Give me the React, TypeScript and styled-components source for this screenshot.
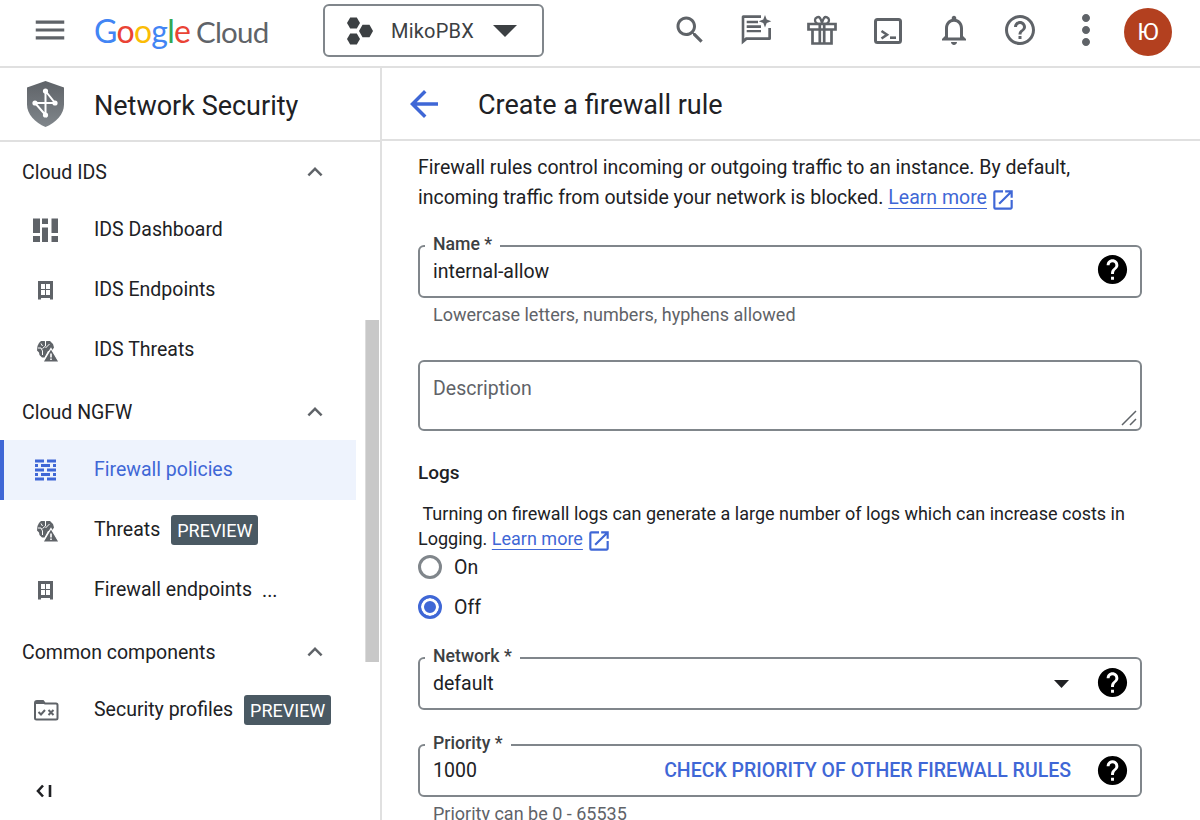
import React from 'react';
import styled, { createGlobalStyle } from 'styled-components';

const GlobalStyle = createGlobalStyle`
  html, body {
    margin: 0;
    padding: 0;
    background: #fff;
    font-family: Roboto, "Liberation Sans", Arial, sans-serif;
    color: #202124;
    overflow: hidden;
  }
  * { box-sizing: border-box; }
`;

const BLUE = '#3f67d6';
const GREY = '#5f6368';

const Page = styled.div`
  width: 1200px;
  height: 820px;
  display: flex;
  flex-direction: column;
  overflow: hidden;
`;

/* top bar */
const TopBar = styled.header`
  height: 68px;
  flex: none;
  display: flex;
  align-items: center;
  border-bottom: 2px solid #e0e0e0;
  padding: 0 28px 4px 31px;
`;

const MenuIcon = styled.svg`
  color: ${GREY};
  margin-bottom: 2px;
  flex: none;
`;

const Logo = styled.div`
  display: flex;
  align-items: baseline;
  margin: 0 0 2px 25px;
  font-family: Lato, Roboto, sans-serif;
  font-size: 32px;
  letter-spacing: -0.8px;
  color: ${GREY};
  width: 187px;
`;

const LogoLetter = styled.span<{ $c: string }>`
  color: ${({ $c }) => $c};
`;

const LogoWord = styled.span`
  margin-left: 6px;
  font-size: 29.5px;
`;

const ProjectPicker = styled.div`
  margin: 0 0 1px 42px;
  width: 221px;
  height: 53px;
  border: 2px solid #80868b;
  border-radius: 6px;
  display: flex;
  align-items: center;
  padding-left: 22px;
  font-size: 20px;
  color: #3c4043;
`;

const ProjectName = styled.span`
  margin-left: 17px;
  margin-right: 19px;
  letter-spacing: 0.2px;
`;

const IconGroup = styled.div`
  margin-left: auto;
  display: flex;
  align-items: center;
`;

const IconButton = styled.div`
  width: 66px;
  height: 48px;
  margin-bottom: 2px;
  display: flex;
  align-items: center;
  justify-content: center;
  color: ${GREY};
`;

const Avatar = styled.div`
  width: 48px;
  height: 48px;
  margin: 2px 0 0 5px;
  border-radius: 50%;
  background: #b3401f;
  color: #fff;
  font-size: 24px;
  display: flex;
  align-items: center;
  justify-content: center;
`;

/* page body */
const Body = styled.div`
  flex: 1;
  display: flex;
  min-height: 0;
`;

const Sidebar = styled.aside`
  width: 382px;
  flex: none;
  border-right: 2px solid #e0e0e0;
  position: relative;
  display: flex;
  flex-direction: column;
`;

const SideHead = styled.div`
  height: 74px;
  flex: none;
  display: flex;
  align-items: center;
  padding-left: 26px;
  border-bottom: 2px solid #e0e0e0;
  font-size: 27px;
  color: #202124;
`;

const SideTitle = styled.span`
  margin: 3px 0 0 28px;
`;

const NavList = styled.nav`
  flex: 1;
  padding-top: 2px;
  min-height: 0;
`;

const NavSection = styled.section`
  margin-bottom: 4px;
`;

const NavHeader = styled.div`
  height: 56px;
  width: 356px;
  display: flex;
  align-items: center;
  justify-content: space-between;
  padding-left: 22px;
  font-size: 19.5px;
  color: #202124;
  svg { color: ${GREY}; margin-right: 26px; }
`;

const NavItem = styled.div<{ $active?: boolean }>`
  height: 60px;
  width: 356px;
  display: flex;
  align-items: center;
  padding-left: ${({ $active }) => ($active ? '26px' : '30px')};
  border-left: ${({ $active }) => ($active ? `4px solid ${BLUE}` : 'none')};
  background: ${({ $active }) => ($active ? '#eef3fd' : 'transparent')};
  color: ${({ $active }) => ($active ? BLUE : '#202124')};
  font-size: 19.5px;
  svg { color: ${({ $active }) => ($active ? BLUE : GREY)}; flex: none; }
`;

const NavLabel = styled.span`
  margin: 0 0 2px 34px;
`;

const Ellipsis = styled.span`
  margin-left: 10px;
  font-size: 19.5px;
`;

const PreviewBadge = styled.span`
  margin-left: 11px;
  height: 30px;
  padding: 0 6px;
  display: inline-flex;
  align-items: center;
  background: #4a5963;
  color: #fff;
  border-radius: 3px;
  font-size: 18px;
`;

const CollapseRow = styled.div`
  height: 40px;
  margin-top: 31px;
  padding-left: 33px;
  display: flex;
  align-items: center;
  color: #202124;
`;

const ScrollThumb = styled.div`
  position: absolute;
  left: 365px;
  top: 252px;
  width: 14px;
  height: 342px;
  background: #c8c8c8;
  border-left: 1px solid #dcdcdc;
`;

/* right column */
const Main = styled.main`
  flex: 1;
  min-width: 0;
  display: flex;
  flex-direction: column;
`;

const MainHead = styled.div`
  height: 73px;
  flex: none;
  display: flex;
  align-items: center;
  padding-left: 21px;
  border-bottom: 2px solid #e0e0e0;
  color: ${BLUE};
`;

const PageTitle = styled.h1`
  margin: 3px 0 0 33px;
  font-weight: 400;
  font-size: 27px;
  color: #202124;
`;

const Form = styled.div`
  flex: 1;
  min-height: 0;
  overflow: hidden;
  padding: 12px 58px 0 36px;
  font-size: 19.5px;
  color: #202124;
`;

const Intro = styled.p`
  margin: 0;
  height: 60px;
  line-height: 30px;
`;

const Link = styled.a`
  color: ${BLUE};
  text-decoration: underline;
  text-underline-offset: 4px;
`;

const ExternalIcon = styled.svg`
  color: ${BLUE};
  vertical-align: -9px;
  margin-left: 3px;
`;

const Field = styled.div<{ $h?: number; $mt: number }>`
  position: relative;
  margin-top: ${({ $mt }) => $mt}px;
  height: ${({ $h }) => $h ?? 53}px;
  border: 2px solid #80868b;
  border-radius: 6px;
  display: flex;
  align-items: center;
  padding: 0 10px 0 13px;
`;

const FieldLabel = styled.label`
  position: absolute;
  left: 5px;
  top: -13px;
  padding: 0 8px;
  height: 20px;
  line-height: 20px;
  background: #fff;
  font-size: 17.7px;
  font-weight: 500;
  color: #3c4043;
`;

const FieldValue = styled.span`
  flex: 1;
`;

const Placeholder = styled.span`
  align-self: flex-start;
  margin-top: 15px;
  color: #5f6368;
`;

const Hint = styled.div`
  margin: 6px 0 0 15px;
  font-size: 18px;
  line-height: 22px;
  color: #5f6368;
`;

const ResizeGrip = styled.svg`
  position: absolute;
  right: 1px;
  bottom: 1px;
  color: #5f6368;
`;

const FieldAction = styled.span`
  color: ${BLUE};
  font-weight: 500;
  font-size: 19.5px;
  margin-right: 24px;
`;

const SelectCaret = styled.svg`
  color: #202124;
  margin-right: 26px;
`;

const SectionTitle = styled.h2`
  margin: 30px 0 0;
  font-size: 19px;
  line-height: 24px;
  font-weight: 500;
  color: #202124;
`;

const LogsText = styled.p`
  margin: 16px 0 0;
  height: 50px;
  font-size: 18px;
  line-height: 25px;
`;

const RadioGroup = styled.div`
  margin-top: -4px;
`;

const RadioRow = styled.div`
  height: 40px;
  display: flex;
  align-items: center;
  gap: 12px;
`;

const RadioDot = styled.span<{ $on?: boolean }>`
  width: 24px;
  height: 24px;
  border-radius: 50%;
  border: 3px solid ${({ $on }) => ($on ? BLUE : '#80868b')};
  background: ${({ $on }) => ($on ? BLUE : 'transparent')};
  box-shadow: ${({ $on }) => ($on ? 'inset 0 0 0 3px #fff' : 'none')};
`;

const HelpSvg = styled.svg<{ $up: number }>`
  flex: none;
  margin-bottom: ${({ $up }) => $up}px;
`;

const HelpFilled = ({ up = 0 }: { up?: number }) => (
  <HelpSvg $up={up} width="35" height="35" viewBox="0 0 24 24" fill="#000">
    <path d="M12 2C6.48 2 2 6.48 2 12s4.48 10 10 10 10-4.48 10-10S17.52 2 12 2zm1 17h-2v-2h2v2zm2.07-7.75l-.9.92C13.45 12.9 13 13.5 13 15h-2v-.5c0-1.1.45-2.1 1.17-2.83l1.24-1.26c.37-.36.59-.86.59-1.41 0-1.1-.9-2-2-2s-2 .9-2 2H8c0-2.21 1.79-4 4-4s4 1.79 4 4c0 .88-.36 1.68-.93 2.25z" />
  </HelpSvg>
);

const ExpandLess = () => (
  <svg width="30" height="30" viewBox="0 0 24 24" fill="currentColor">
    <path d="M12 8l-6 6 1.41 1.41L12 10.83l4.59 4.58L18 14z" />
  </svg>
);

const OpenInNew = () => (
  <ExternalIcon width="26" height="26" viewBox="0 0 24 24" fill="currentColor">
    <path d="M19 19H5V5h7V3H5a2 2 0 00-2 2v14a2 2 0 002 2h14c1.1 0 2-.9 2-2v-7h-2v7zM14 3v2h3.59l-9.83 9.83 1.41 1.41L19 6.41V10h2V3h-7z" />
  </ExternalIcon>
);

const DashboardIcon = () => (
  <svg width="30" height="30" viewBox="0 0 30 30" fill="currentColor">
    <path d="M3 3.500h7v14.500H3zM12 3.500h6v5.500h-6zM21.500 3.500h6.500v14.500h-6.500zM12 12.500h6v14.500h-6zM3 21h7v6H3zM21.500 21h6.500v6h-6.500z" />
  </svg>
);

const EndpointIcon = () => (
  <svg width="30" height="30" viewBox="0 0 30 30" fill="currentColor">
    <path fillRule="evenodd" d="M8 6h15v18.500h-3V23H11v1.500H8zm3 3v5h4v-5zm5 0v5h4V9zm-5 6v5h4v-5zm5 0v5h4v-5z" />
  </svg>
);

const ThreatIcon = () => (
  <svg width="30" height="30" viewBox="0 0 30 30" fill="currentColor">
    <path d="M11 6h3.800v.5h1.400V6H20l3 3 1 3.500-2 3-4 .5-3.500 6.500H12L9.500 20l-.5-2.500-2-2 .5-4.500L9 8z" />
    <path d="M15.500 6v5l-3 2.500M11 8.500l1.500 2.500M8 13h3l1.500 3v4M19.500 9l-4 4" stroke="#fff" strokeWidth="1" fill="none" />
    <path d="M21 13.500L29 27H13z" stroke="#fff" strokeWidth="1.200" />
    <path d="M20.200 18.500h1.600v4h-1.600zM20.200 23.500h1.600v1.500h-1.600z" fill="#fff" />
  </svg>
);

const FirewallIcon = () => (
  <svg width="30" height="30" viewBox="0 0 30 30" fill="currentColor">
    <path d="M5 4.500h9v3H5zM17 4.500h9v3h-9zM5 9h3v3H5zM11 9h9v3h-9zM23 9h3v3h-3zM5 13.500h9v3H5zM17 13.500h9v3h-9zM5 18h3v3H5zM11 18h9v3h-9zM23 18h3v3h-3zM5 22.500h9v3H5zM17 22.500h9v3h-9z" />
  </svg>
);

const ProfilesIcon = () => (
  <svg width="30" height="30" viewBox="0 0 30 30" fill="none">
    <path d="M5 8a2 2 0 012-2h6l2 2.500h11a1.500 1.500 0 011.500 1.500v13a1.500 1.500 0 01-1.500 1.500H6.500A1.500 1.500 0 015 23z" stroke="currentColor" strokeWidth="2" />
    <path d="M5 6.500h8l2 2.500H5z" fill="currentColor" />
    <path d="M8.500 17l2.500 2.500 4-4.500M18.500 15l5 5M23.500 15l-5 5" stroke="currentColor" strokeWidth="2" />
  </svg>
);

export default function App() {
  return (
    <Page>
      <GlobalStyle />
      <TopBar>
        <MenuIcon width="38" height="38" viewBox="0 0 24 24" fill="currentColor">
          <path d="M3 18h18v-2H3v2zm0-5h18v-2H3v2zm0-7v2h18V6H3z" />
        </MenuIcon>
        <Logo>
          <LogoLetter $c="#4285f4">G</LogoLetter>
          <LogoLetter $c="#ea4335">o</LogoLetter>
          <LogoLetter $c="#fbbc05">o</LogoLetter>
          <LogoLetter $c="#4285f4">g</LogoLetter>
          <LogoLetter $c="#34a853">l</LogoLetter>
          <LogoLetter $c="#ea4335">e</LogoLetter>
          <LogoWord>Cloud</LogoWord>
        </Logo>
        <ProjectPicker>
          <svg width="27" height="28" viewBox="0 0 27 28" fill="#3c4043">
            <path d="M0 6l3.200-5.600h6.600L13 6 9.800 11.600H3.200z" />
            <path d="M12 14l3.500-6.200h7L26 14l-3.500 6.200h-7z" />
            <path d="M0 22l3.200-5.600h6.600L13 22l-3.200 5.600H3.200z" />
          </svg>
          <ProjectName>MikoPBX</ProjectName>
          <svg width="24" height="12" viewBox="0 0 24 12" fill="#3c4043">
            <path d="M0 0h24L12 12z" />
          </svg>
        </ProjectPicker>
        <IconGroup>
          <IconButton>
            <svg width="36" height="36" viewBox="0 0 24 24" fill="currentColor">
              <path d="M15.500 14h-.79l-.28-.27C15.410 12.590 16 11.110 16 9.500 16 5.910 13.090 3 9.500 3S3 5.910 3 9.500 5.910 16 9.500 16c1.610 0 3.090-.59 4.230-1.570l.27.28v.79l5 4.990L20.490 19l-4.990-5zm-6 0C7.010 14 5 11.990 5 9.500S7.010 5 9.500 5 14 7.010 14 9.500 11.990 14 9.500 14z" />
            </svg>
          </IconButton>
          <IconButton>
            <svg width="36" height="36" viewBox="0 0 36 36" fill="currentColor">
              <path d="M3.700 4.800A1.500 1.500 0 015.200 3.300H23V6H6.300v20.500l1.500-1.200H30.300V16H33v10.500a1.500 1.500 0 01-1.500 1.500H9l-5.300 4.500z" />
              <path d="M8.700 8.700H20v2.600H8.700zM8.700 13.300H23V16H8.700zM8.700 18H23v2.300H8.700z" />
              <path d="M27 3l1.700 4.600L33.300 9.300l-4.600 1.700L27 15.600l-1.700-4.600-4.600-1.700 4.600-1.700z" />
            </svg>
          </IconButton>
          <IconButton>
            <svg width="36" height="36" viewBox="0 0 36 36" fill="none" stroke="currentColor" strokeWidth="2.700">
              <path d="M4.500 12h27v5.500h-27zM8.500 17.500v14h19v-14M15.800 12v19.500M20.200 12v19.500" />
              <path d="M16 12c-3.500 0-5-1.500-5-4s3.500-4 5-2 2 6 2 6 .5-4 2-6 5-.5 5 2-1.500 4-5 4" strokeWidth="2.300" />
            </svg>
          </IconButton>
          <IconButton>
            <svg width="36" height="36" viewBox="0 0 36 36" fill="none" stroke="currentColor" strokeWidth="3">
              <rect x="5.500" y="7.500" width="25" height="23" rx="2" />
              <path d="M11.500 19l5.500 3.800-5.500 3.700" strokeWidth="2.600" />
              <path d="M20 25.700h6" strokeWidth="2.600" />
            </svg>
          </IconButton>
          <IconButton>
            <svg width="36" height="36" viewBox="0 0 24 24" fill="currentColor">
              <path d="M12 22c1.100 0 2-.9 2-2h-4c0 1.100.9 2 2 2zm6-6v-5c0-3.070-1.630-5.640-4.500-6.320V4c0-.83-.67-1.500-1.500-1.500s-1.500.67-1.500 1.500v.68C7.640 5.360 6 7.920 6 11v5l-2 2v1h16v-1l-2-2zm-2 1H8v-6c0-2.480 1.510-4.500 4-4.500s4 2.020 4 4.500v6z" />
            </svg>
          </IconButton>
          <IconButton>
            <svg width="36" height="36" viewBox="0 0 24 24" fill="currentColor">
              <path d="M11 18h2v-2h-2v2zm1-16C6.480 2 2 6.480 2 12s4.480 10 10 10 10-4.480 10-10S17.520 2 12 2zm0 18c-4.410 0-8-3.590-8-8s3.590-8 8-8 8 3.590 8 8-3.590 8-8 8zm0-14c-2.210 0-4 1.790-4 4h2c0-1.100.9-2 2-2s2 .9 2 2c0 2-3 1.750-3 5h2c0-2.250 3-2.500 3-5 0-2.210-1.790-4-4-4z" />
            </svg>
          </IconButton>
          <IconButton>
            <svg width="48" height="48" viewBox="0 0 24 24" fill="currentColor">
              <path d="M12 8c1.100 0 2-.9 2-2s-.9-2-2-2-2 .9-2 2 .9 2 2 2zm0 2c-1.100 0-2 .9-2 2s.9 2 2 2 2-.9 2-2-.9-2-2-2zm0 6c-1.100 0-2 .9-2 2s.9 2 2 2 2-.9 2-2-.9-2-2-2z" />
            </svg>
          </IconButton>
          <Avatar>Ю</Avatar>
        </IconGroup>
      </TopBar>

      <Body>
        <Sidebar>
          <SideHead>
            <svg width="40" height="46" viewBox="0 0 40 46">
              <defs>
                <linearGradient id="shieldFill" x1="0" y1="0" x2="0" y2="1">
                  <stop offset="0" stopColor="#5f6368" />
                  <stop offset="1" stopColor="#80868b" />
                </linearGradient>
              </defs>
              <path d="M19.500 0l18.500 6.500v17c0 10-8 18-18.500 22.500C9 41.500 1 33.500 1 23.500v-17z" fill="url(#shieldFill)" />
              <path d="M19.500 10L29 22H9l10.500 12V10" stroke="#fff" strokeWidth="2" fill="none" />
              <circle cx="19.500" cy="10" r="2.600" fill="#fff" />
              <circle cx="9" cy="22" r="2.600" fill="#fff" />
              <circle cx="29" cy="22" r="2.600" fill="#fff" />
              <circle cx="19.500" cy="34" r="2.600" fill="#fff" />
            </svg>
            <SideTitle>Network Security</SideTitle>
          </SideHead>
          <NavList>
            <NavSection>
              <NavHeader>Cloud IDS<ExpandLess /></NavHeader>
              <NavItem><DashboardIcon /><NavLabel>IDS Dashboard</NavLabel></NavItem>
              <NavItem><EndpointIcon /><NavLabel>IDS Endpoints</NavLabel></NavItem>
              <NavItem><ThreatIcon /><NavLabel>IDS Threats</NavLabel></NavItem>
            </NavSection>
            <NavSection>
              <NavHeader>Cloud NGFW<ExpandLess /></NavHeader>
              <NavItem $active><FirewallIcon /><NavLabel>Firewall policies</NavLabel></NavItem>
              <NavItem><ThreatIcon /><NavLabel>Threats</NavLabel><PreviewBadge>PREVIEW</PreviewBadge></NavItem>
              <NavItem><EndpointIcon /><NavLabel>Firewall endpoints</NavLabel><Ellipsis>...</Ellipsis></NavItem>
            </NavSection>
            <NavSection>
              <NavHeader>Common components<ExpandLess /></NavHeader>
              <NavItem><ProfilesIcon /><NavLabel>Security profiles</NavLabel><PreviewBadge>PREVIEW</PreviewBadge></NavItem>
            </NavSection>
            <CollapseRow>
              <svg width="20" height="20" viewBox="0 0 20 20" fill="none" stroke="currentColor" strokeWidth="2.600">
                <path d="M10 4.500L5 10l5 5.500M17 4v12" />
              </svg>
            </CollapseRow>
          </NavList>
          <ScrollThumb />
        </Sidebar>

        <Main>
          <MainHead>
            <svg width="42" height="42" viewBox="0 0 24 24" fill="currentColor">
              <path d="M20 11H7.830l5.590-5.590L12 4l-8 8 8 8 1.410-1.410L7.830 13H20v-2z" />
            </svg>
            <PageTitle>Create a firewall rule</PageTitle>
          </MainHead>
          <Form>
            <Intro>
              Firewall rules control incoming or outgoing traffic to an instance. By default,
              <br />
              incoming traffic from outside your network is blocked. <Link>Learn more</Link>
              <OpenInNew />
            </Intro>
            <Field $mt={32}>
              <FieldLabel>Name *</FieldLabel>
              <FieldValue>internal-allow</FieldValue>
              <HelpFilled up={4} />
            </Field>
            <Hint>Lowercase letters, numbers, hyphens allowed</Hint>
            <Field $mt={34} $h={71}>
              <Placeholder>Description</Placeholder>
              <ResizeGrip width="20" height="20" viewBox="0 0 20 20" stroke="currentColor" strokeWidth="1.500">
                <path d="M3 17L17 3M11 17l6-6" />
              </ResizeGrip>
            </Field>
            <SectionTitle>Logs</SectionTitle>
            <LogsText>
              &nbsp;Turning on firewall logs can generate a large number of logs which can increase costs in
              <br />
              Logging. <Link>Learn more</Link>
              <OpenInNew />
            </LogsText>
            <RadioGroup>
              <RadioRow><RadioDot />On</RadioRow>
              <RadioRow><RadioDot $on />Off</RadioRow>
            </RadioGroup>
            <Field $mt={30}>
              <FieldLabel>Network *</FieldLabel>
              <FieldValue>default</FieldValue>
              <SelectCaret width="15" height="8" viewBox="0 0 15 8" fill="currentColor">
                <path d="M0 0h15L7.500 8z" />
              </SelectCaret>
              <HelpFilled up={2} />
            </Field>
            <Field $mt={34}>
              <FieldLabel>Priority *</FieldLabel>
              <FieldValue>1000</FieldValue>
              <FieldAction>CHECK PRIORITY OF OTHER FIREWALL RULES</FieldAction>
              <HelpFilled />
            </Field>
            <Hint>Priority can be 0 - 65535</Hint>
          </Form>
        </Main>
      </Body>
    </Page>
  );
}
